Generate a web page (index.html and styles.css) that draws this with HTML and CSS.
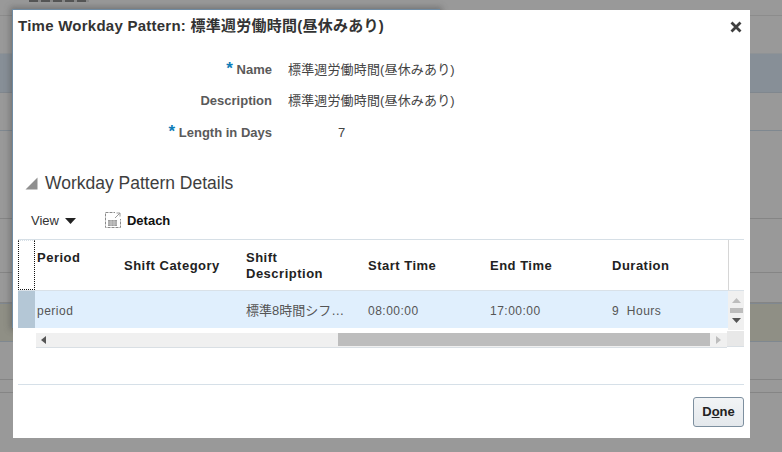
FILE: index.html
```html
<!DOCTYPE html>
<html lang="ja">
<head>
<meta charset="utf-8">
<title>Time Workday Pattern</title>
<link rel="stylesheet" href="styles.css">
</head>
<body>
<div class="page">
  <div class="bg-top"><div class="bg-clip"></div></div>
  <div class="bg-band-blue"></div>
  <div class="bg-row r39"></div>
  <div class="bg-row r88"></div>
  <div class="bg-row r54"></div>
  <div class="bg-row r30"></div>
  <div class="bg-band-olive"></div>
  <div class="bg-row r38"></div>
  <div class="bg-row r13"></div>
</div>
<div class="ghost"></div>
<div class="dialog">
  <div class="title-bar">
    <div class="title">Time Workday Pattern: 標準週労働時間(昼休みあり)</div>
    <svg class="close" width="12" height="12" viewBox="0 0 12 12"><path d="M1.5 1.5L10.5 10.5M10.5 1.5L1.5 10.5" stroke="#3f3f3f" stroke-width="2.8"/></svg>
  </div>
  <div class="form">
    <div class="label"><span class="req">*</span> Name</div><div class="value">標準週労働時間(昼休みあり)</div>
    <div class="label">Description</div><div class="value">標準週労働時間(昼休みあり)</div>
    <div class="label"><span class="req">*</span> Length in Days</div><div class="value num">7</div>
  </div>
  <div class="section">
    <svg class="disclosure" width="13" height="13" viewBox="0 0 13 13"><path d="M12.5 0.5V12.5H0.5Z" fill="#8f8f8f"/></svg>
    <h2>Workday Pattern Details</h2>
  </div>
  <div class="toolbar">
    <span class="view">View</span>
    <svg class="caret" width="11" height="6" viewBox="0 0 11 6"><path d="M0 0H11L5.500 6Z" fill="#222"/></svg>
    <svg class="detach" width="17" height="17" viewBox="0 0 17 17">
      <rect x="0.500" y="0.500" width="15" height="15" fill="#fff" stroke="#8a8a8a" stroke-dasharray="3 1"/>
      <rect x="10" y="0" width="7" height="7" fill="#fff"/>
      <path d="M10 6L15 1M11.500 1H15V4.500" fill="none" stroke="#9a9a9a"/>
      <rect x="3" y="8" width="9" height="6" fill="#9b9b9b"/>
      <path d="M3 10H12M3 12H12M6 8V14M9 8V14" stroke="#d5d5d5" stroke-width="0.700"/>
    </svg>
    <span class="detach-label">Detach</span>
  </div>
  <div class="table">
    <div class="head">
      <div class="corner"></div>
      <div class="th top">Period</div>
      <div class="th">Shift Category</div>
      <div class="th">Shift<br>Description</div>
      <div class="th">Start Time</div>
      <div class="th">End Time</div>
      <div class="th last">Duration</div>
    </div>
    <div class="body">
      <div class="rows">
        <div class="row">
          <div class="selected"></div>
          <div class="td">period</div>
          <div class="td"></div>
          <div class="td cjk">標準8時間シフ…</div>
          <div class="td">08:00:00</div>
          <div class="td">17:00:00</div>
          <div class="td">9&nbsp; Hours</div>
        </div>
      </div>
      <div class="vscroll">
        <svg class="arrow" width="9" height="5" viewBox="0 0 9 5"><path d="M0 5H9L4.500 0Z" fill="#bdbdbd"/></svg>
        <div class="vthumb"></div>
        <svg class="arrow" width="9" height="5" viewBox="0 0 9 5"><path d="M0 0H9L4.500 5Z" fill="#555"/></svg>
      </div>
    </div>
    <div class="hbar">
      <div class="hscroll">
        <svg class="harrow" width="5" height="8" viewBox="0 0 5 8"><path d="M5 0V8L0 4Z" fill="#555"/></svg>
        <div class="hspace"></div>
        <div class="hthumb"></div>
        <svg class="harrow right" width="5" height="8" viewBox="0 0 5 8"><path d="M0 0V8L5 4Z" fill="#bdbdbd"/></svg>
      </div>
      <div class="scorner"></div>
    </div>
  </div>
  <div class="footer">
    <button class="done" type="button">D<u>o</u>ne</button>
  </div>
</div>
</body>
</html>
```
FILE: styles.css
```css
html, body {
  margin: 0;
  padding: 0;
  width: 782px;
  height: 452px;
  overflow: hidden;
  background: #999999;
  font-family: "Liberation Sans", "Noto Sans CJK JP", sans-serif;
}
.page { display: flex; flex-direction: column; }
.bg-top { height: 15px; border-bottom: 1px solid #8c8c8c; margin-bottom: 37px; box-sizing: content-box; }
.bg-clip { width: 60px; height: 2px; margin-left: 29px; background: repeating-linear-gradient(90deg, #555 0 9px, #8a8a8a 9px 12px); }
.bg-band-blue { height: 38px; background: #878f97; border-top: 1px solid #8f9396; border-bottom: 1px solid #80878e; }
.bg-row { border-bottom: 1px solid #858585; }
.r39 { height: 37px; border-bottom-color: #7f8890; }
.r88 { height: 87px; }
.r54 { height: 53px; }
.r30 { height: 29px; }
.bg-band-olive { height: 37px; background: #8f8f85; border-top: 1px solid #808890; border-bottom: 1px solid #7f8890; }
.r38 { height: 37px; }
.r13 { height: 12px; }

.ghost {
  position: absolute;
  left: 12px;
  top: 9px;
  width: 428px;
  height: 319px;
  background: #6f8ba3;
  box-shadow: 0 0 6px 2px rgba(70, 70, 70, 0.45);
}
.dialog {
  position: absolute;
  left: 13px;
  top: 10px;
  width: 737px;
  height: 428px;
  background: #fff;
  box-sizing: border-box;
  padding: 0 6px 0 5px;
  display: flex;
  flex-direction: column;
}
.title-bar { display: flex; justify-content: space-between; align-items: center; height: 32px; }
.title { font-size: 15px; font-weight: bold; color: #333; letter-spacing: 0.25px; white-space: nowrap; padding-bottom: 3px; }
.close { margin-right: 2px; margin-top: 2px; }

.form {
  display: grid;
  grid-template-columns: 254px 1fr;
  column-gap: 16px;
  grid-auto-rows: 31.500px;
  align-items: center;
  margin-top: 12px;
}
.label { text-align: right; font-size: 13px; line-height: 18px; font-weight: bold; color: #5a5a5a; white-space: nowrap; }
.req { color: #0f7db8; font-size: 17px; line-height: 10px; }
.value { font-size: 13px; line-height: 18px; color: #444; white-space: nowrap; letter-spacing: 0.15px; }
.num { padding-left: 50px; }

.section { display: flex; align-items: center; height: 26px; margin-top: 22px; padding-left: 7px; }
.section h2 { margin: 0 0 0 7px; font-size: 17.500px; font-weight: normal; color: #3e3e3e; white-space: nowrap; }

.toolbar { display: flex; align-items: center; height: 26px; margin-top: 11px; padding-left: 13px; font-size: 13px; color: #222; }
.view { color: #333; }
.caret { margin-left: 6px; }
.detach { margin-left: 29px; }
.detach-label { margin-left: 5px; font-weight: bold; color: #111; }

.table { margin-top: 5px; border-top: 1px solid #d6dfe6; }
.head { display: grid; grid-template-columns: 17px 82px 122px 122px 122px 122px 123px; height: 50px; width: 710px; border-right: 1px solid #d6d6d6; box-sizing: content-box; overflow: hidden; }
.corner { border: 1px dotted #111; border-top-color: #d6dfe6; box-sizing: border-box; }
.th {
  font-size: 13px;
  font-weight: bold;
  color: #222;
  display: flex;
  align-items: center;
  padding-left: 2px;
  letter-spacing: 0.5px;
  line-height: 16px;
  white-space: nowrap;
  padding-top: 3px;
}
.th.top { align-items: flex-start; padding-top: 10px; }
.th + .th { padding-left: 7px; }
.body { display: flex; border-top: 1px solid #d9e1e8; }
.rows { width: 710px; }
.row { display: grid; grid-template-columns: 17px 82px 122px 122px 122px 122px 123px; height: 37px; background: #e0effd; align-items: center; overflow: hidden; }
.selected { height: 37px; background: #b4c7d6; }
.td { font-size: 12px; color: #555; white-space: nowrap; padding: 3px 0 0 2px; letter-spacing: 0.5px; }
.td + .td + .td { padding-left: 7px; }
.td.cjk { font-size: 13px; letter-spacing: 0; padding-left: 6px; padding-top: 1px; }
.vscroll { width: 16px; height: 39px; background: #f0f0f0; display: flex; flex-direction: column; align-items: center; padding-top: 7px; box-sizing: border-box; }
.arrow { display: block; }
.vthumb { width: 13px; height: 5px; background: #bdbdbd; margin: 5px 0; }

.hbar { display: flex; height: 18px; }
.hscroll {
  margin-left: 18px;
  margin-top: 3px;
  width: 691px;
  height: 15px;
  background: #f0f0f0;
  border-bottom: 1px solid #d9dfe4;
  display: flex;
  align-items: center;
  box-sizing: border-box;
}
.harrow { margin-left: 5px; flex: none; }
.hspace { width: 292px; }
.hthumb { width: 372px; height: 13px; background: #bdbdbd; }
.harrow.right { margin-left: 6px; }
.scorner { width: 17px; margin-top: 1px; height: 16px; background: #e8e8e8; border-bottom: 1px solid #d9dfe4; box-sizing: border-box; }

.footer {
  margin-top: 36px;
  border-top: 1px solid #d6e0e8;
  display: flex;
  justify-content: flex-end;
  padding-top: 12px;
}
.done {
  width: 51px;
  height: 30px;
  padding: 0;
  border: 1px solid #7d8f9f;
  border-radius: 3px;
  background: linear-gradient(#f2f4f6, #e4e8ec);
  font-family: "Liberation Sans", sans-serif;
  font-size: 13px;
  font-weight: bold;
  color: #222;
}
```
